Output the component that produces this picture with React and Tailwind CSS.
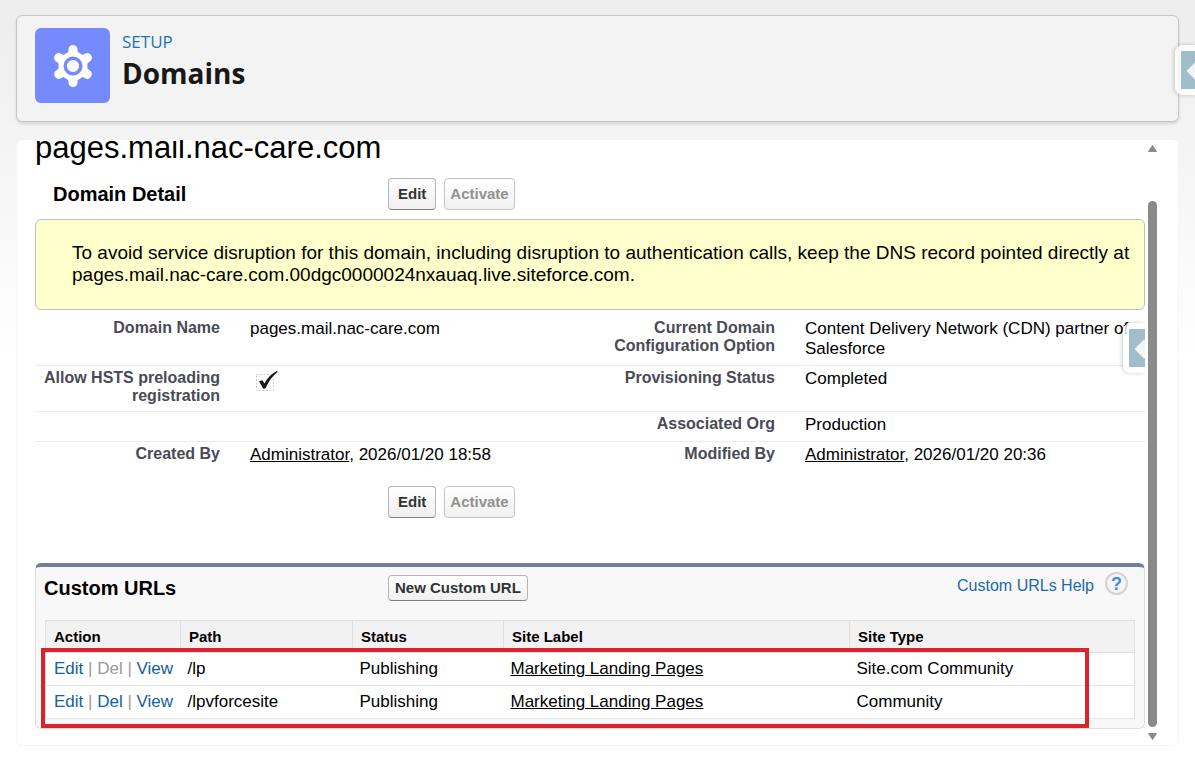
import clsx from "clsx";

const details = [
  {
    left: { label: "Domain Name", value: "pages.mail.nac-care.com" },
    right: {
      label: "Current Domain Configuration Option",
      value: "Content Delivery Network (CDN) partner of Salesforce"
    }
  },
  {
    left: { label: "Allow HSTS preloading registration", value: <CheckMark /> },
    right: { label: "Provisioning Status", value: "Completed" }
  },
  {
    left: null,
    right: { label: "Associated Org", value: "Production" }
  },
  {
    left: { label: "Created By", value: <UserStamp date="2026/01/20 18:58" /> },
    right: { label: "Modified By", value: <UserStamp date="2026/01/20 20:36" /> }
  }
];

const customUrls = [
  { path: "/lp", status: "Publishing", site: "Marketing Landing Pages", type: "Site.com Community", canDelete: false },
  { path: "/lpvforcesite", status: "Publishing", site: "Marketing Landing Pages", type: "Community", canDelete: true }
];

function CheckMark() {
  return (
    <svg role="img" aria-label="Checked" width="24" height="24" viewBox="0 0 24 24" className="ml-1">
      <rect x="2.5" y="5.5" width="17" height="16" fill="none" stroke="#cfcfcf" strokeDasharray="2 1.5" />
      <path d="M5 12.2 8.4 11.2 10.4 14.6C13.4 9 17.600 4.600 23 1.800L23.600 3C18.400 7 14.600 12.200 11.400 19.600L9.200 19.800Z" fill="#1a1a1a" />
    </svg>
  );
}

function UserStamp({ date }) {
  return (
    <>
      <a href="#user" className="underline">Administrator</a>, {date}
    </>
  );
}

function GearIcon() {
  return (
    <svg width="40" height="44" viewBox="0 0 40 44" aria-hidden="true">
      <g fill="#fff">
        <circle cx="20" cy="22" r="14.500" />
        {[0, 60, 120, 180, 240, 300].map((angle) => (
          <path key={angle} transform={`rotate(${angle} 20 22)`} d="M11.500 11Q15.500 10 15.500 6V5A4.500 4 0 0 1 24.500 5V6Q24.500 10 28.500 11L20 20Z" />
        ))}
      </g>
      <circle cx="20" cy="22" r="7.800" fill="#fff" stroke="#758bfd" strokeWidth="3.400" />
    </svg>
  );
}

function HelpIcon() {
  return (
    <span className="grid size-[23px] place-items-center rounded-full border-2 border-[#d3d3d3] bg-[#f4f4f4] text-lg leading-none font-bold text-[#3b8ede]">
      ?
    </span>
  );
}

function Button({ children, tall, ...props }) {
  return (
    <button
      type="button"
      className={clsx(
        "rounded border border-[#b5b5b5] border-b-[#7f7f7f] bg-linear-to-b from-white to-[#f0f0f0] text-[15px] leading-5 font-bold text-[#333] disabled:border-[#c4c4c4] disabled:text-[#919191]",
        tall ? "px-[5px] py-[5px]" : "px-1.5 py-[2px]"
      )}
      {...props}
    >
      {children}
    </button>
  );
}

function DetailButtons() {
  return (
    <div className="flex gap-2">
      <Button tall>
        <span className="px-1">Edit</span>
      </Button>
      <Button tall disabled>Activate</Button>
    </div>
  );
}

// Collapsed side panel handle, cut off by the edge of its container
function SideHandle({ className }) {
  return (
    <button
      type="button"
      aria-label="Open side panel"
      className={clsx("absolute flex h-[50px] items-center rounded-l-lg bg-white/80 pl-1.5 shadow-[-1px_0_4px_rgba(0,0,0,0.2)]", className)}
    >
      <svg width="16" height="38" viewBox="0 0 16 38" aria-hidden="true">
        <rect width="20" height="38" rx="1" fill="#a0bdca" />
        <path d="M5.500 20 15 10.500H16V29.500H15Z" fill="#f2f5f6" />
      </svg>
    </button>
  );
}

function Field({ field }) {
  return (
    <>
      <th scope="row" className="pt-[3px] pb-1.5 text-right text-base leading-[18px] font-bold text-[#4a4a56]">
        {field?.label}
      </th>
      <td className="pt-[3px] pb-1.5 pl-[30px] text-[17px] leading-5">{field?.value}</td>
    </>
  );
}

function DetailTable() {
  return (
    <table className="mt-1.5 w-full table-fixed border-collapse">
      <colgroup>
        <col className="w-1/6" />
        <col className="w-1/3" />
        <col className="w-1/6" />
        <col className="w-1/3" />
      </colgroup>
      <tbody className="align-top">
        {details.map((row) => (
          <tr key={row.right.label} className="border-b border-[#ececec] last:border-b-0">
            <Field field={row.left} />
            <Field field={row.right} />
          </tr>
        ))}
      </tbody>
    </table>
  );
}

function CustomUrls() {
  return (
    <section className="relative rounded-md border border-t-4 border-[#e0e0e0] border-t-[#747e96] bg-[#f8f8f8] px-[9px] pb-[9px]">
      <div className="flex h-[53px] items-start pt-2">
        <h3 className="-ml-px w-[344px] text-xl leading-[26px] font-bold">Custom URLs</h3>
        <Button>New Custom URL</Button>
        <a href="#help" className="mr-[7px] ml-auto flex items-start gap-[11px] text-base leading-[22px] text-[#1b6aa5]">
          Custom URLs Help
          <span className="-mt-[3px]">
            <HelpIcon />
          </span>
        </a>
      </div>

      <table className="w-full table-fixed border-collapse border border-[#e0e0e0] bg-white text-left">
        <colgroup>
          <col className="w-[135px]" />
          <col className="w-[172px]" />
          <col className="w-[151px]" />
          <col className="w-[346px]" />
          <col />
        </colgroup>
        <thead className="bg-[#f2f2f2] text-[15px] leading-[31px]">
          <tr className="border-b border-[#e0e0e0]">
            {["Action", "Path", "Status", "Site Label", "Site Type"].map((name) => (
              <th key={name} className="border-l border-[#e0e0e0] pl-2 font-bold">{name}</th>
            ))}
          </tr>
        </thead>
        <tbody className="text-[17px] leading-8">
          {customUrls.map((url) => (
            <tr key={url.path} className="border-b border-[#e6e6e6]">
              <td className="pl-2 whitespace-nowrap text-[#9a9a9a]">
                <a href="#edit" className="text-[#15609e]">Edit</a>
                {" | "}
                {url.canDelete ? <a href="#del" className="text-[#15609e]">Del</a> : <span>Del</span>}
                {" | "}
                <a href="#view" className="text-[#15609e]">View</a>
              </td>
              <td className="pl-[7px]">{url.path}</td>
              <td className="pl-[7px]">{url.status}</td>
              <td className="pl-[7px]">
                <a href="#site" className="underline">{url.site}</a>
              </td>
              <td className="pl-[7px]">{url.type}</td>
            </tr>
          ))}
        </tbody>
      </table>

      <div className="pointer-events-none absolute top-[81px] right-[55px] bottom-0 left-[5px] border-4 border-[#d9232e]" />
    </section>
  );
}

function Scrollbar() {
  return (
    <div aria-hidden="true" className="mr-[21px] ml-[3px] flex w-[9px] flex-col items-center pt-1 pb-1">
      <svg width="11" height="9" viewBox="0 0 11 9">
        <path d="M5.500 1.500 9.500 7.500H1.500Z" fill="#8a8a8a" stroke="#8a8a8a" strokeLinejoin="round" />
      </svg>
      <div className="mt-12 mb-[5px] w-full flex-1 rounded-full bg-[#8a8a8a]" />
      <svg width="11" height="9" viewBox="0 0 11 9">
        <path d="M5.500 7.500 9.500 1.500H1.500Z" fill="#8a8a8a" stroke="#8a8a8a" strokeLinejoin="round" />
      </svg>
    </div>
  );
}

export default function App() {
  return (
    <div className="relative min-h-screen overflow-hidden bg-linear-to-b from-[#ededed] to-white to-[360px] px-4 pt-[15px] pb-[15px] font-['Liberation_Sans',Arial,sans-serif] text-black">
      <header className="flex items-start gap-3 rounded-md border border-[#c6c6c6] bg-[#f3f3f3] px-[18px] pt-3 pb-[18px] font-['Open_Sans','Noto_Sans',sans-serif] shadow-[0_2px_3px_rgba(0,0,0,0.12)]">
        <div className="grid size-[75px] place-items-center rounded-md bg-[#758bfd]">
          <GearIcon />
        </div>
        <div className="pt-[3px]">
          <p className="text-[17px] leading-[22px] text-[#1b74b8]">SETUP</p>
          <h1 className="text-[28px] leading-10 font-bold text-[#181818]">Domains</h1>
        </div>
      </header>
      <SideHandle className="top-[45px] right-[-2px]" />

      <main className="mt-[18px] flex overflow-hidden rounded-md border border-t-0 border-[#f5f5f5] bg-white">
        <div className="relative min-w-0 flex-1 overflow-hidden pb-4 pl-[18px]">
          <h2 className="-mt-2.5 text-[31px] leading-9">pages.mail.nac-care.com</h2>

          <div className="mt-3 flex items-center">
            <h3 className="w-[353px] pl-[18px] text-xl leading-[30px] font-bold">Domain Detail</h3>
            <DetailButtons />
          </div>

          <p className="mt-[9px] rounded-md border border-[#b9c3c4] bg-[#ffffcc] pt-[22px] pr-2.5 pb-[23px] pl-9 text-[19px] leading-[22px]">
            To avoid service disruption for this domain, including disruption to authentication calls, keep the DNS record pointed directly at pages.mail.nac-care.com.00dgc0000024nxauaq.live.siteforce.com.
          </p>

          <DetailTable />

          <div className="mt-[15px] mb-[45px] pl-[353px]">
            <DetailButtons />
          </div>

          <CustomUrls />
          <SideHandle className="top-[183px] right-0" />
        </div>
        <Scrollbar />
      </main>
    </div>
  );
}
